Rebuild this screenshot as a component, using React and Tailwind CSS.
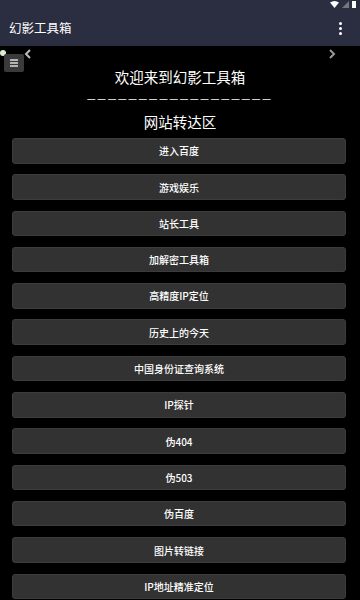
import React from 'react';

const ITEMS = [
  '进入百度',
  '游戏娱乐',
  '站长工具',
  '加解密工具箱',
  '高精度IP定位',
  '历史上的今天',
  '中国身份证查询系统',
  'IP探针',
  '伪404',
  '伪503',
  '伪百度',
  '图片转链接',
  'IP地址精准定位',
];

const FONT = { fontFamily: '"Noto Sans CJK SC", "Noto Sans", sans-serif' };

function StatusIcons() {
  return (
    <div className="absolute right-1 top-0 flex items-center gap-[3px] h-[8px]">
      <svg width="9" height="7" viewBox="0 0 9 7">
        <path d="M0 1.5 Q4.5 -1.5 9 1.5 L4.5 7 Z" fill="#fff" />
      </svg>
      <svg width="7" height="7" viewBox="0 0 7 7">
        <path d="M7 0 L7 7 L0 7 Z" fill="#777" />
      </svg>
      <div className="w-[4px] h-[7px] bg-white" />
    </div>
  );
}

export default function App() {
  return (
    <div className="w-[360px] h-[600px] overflow-hidden bg-black text-white" style={FONT}>
      {/* app bar */}
      <div className="relative h-[46px] bg-[#2b2d41] flex items-center px-[9px]">
        <StatusIcons />
        <span className="text-[12.5px] text-white leading-none mt-[10px]">幻影工具箱</span>
        <div className="ml-auto flex flex-col gap-[2px] mr-[9px] mt-[10px]">
          <div className="w-[3px] h-[3px] rounded-full bg-white" />
          <div className="w-[3px] h-[3px] rounded-full bg-white" />
          <div className="w-[3px] h-[3px] rounded-full bg-white" />
        </div>
      </div>

      {/* content */}
      <div className="relative">
        <div className="absolute left-0 top-[4px] w-[6px] h-[6px] rounded-full bg-[#d8f0d0]" />
        <div className="absolute left-[4px] top-[8px] w-[20px] h-[18px] bg-[#3a3a3a] rounded-[2px] flex items-center justify-center">
          <svg width="10" height="8" viewBox="0 0 10 8">
            <path d="M1 1 H9 M1 4 H9 M1 7 H9" stroke="#ddd" strokeWidth="1.3" />
          </svg>
        </div>
        <svg className="absolute left-[24px] top-[3px]" width="8" height="10" viewBox="0 0 8 10">
          <path d="M6 1 L2 5 L6 9" stroke="#bbb" strokeWidth="2" fill="none" />
        </svg>
        <svg className="absolute left-[328px] top-[3px]" width="8" height="10" viewBox="0 0 8 10">
          <path d="M2 1 L6 5 L2 9" stroke="#999" strokeWidth="2" fill="none" />
        </svg>

        <div className="flex flex-col items-center pt-[22px]">
          <div className="text-[14.5px] leading-[18px]">欢迎来到幻影工具箱</div>
          <div
            className="text-[8px] leading-[10px] tracking-[2.3px] font-bold mt-[8px] text-white"
            style={{ fontFamily: '"Liberation Sans", sans-serif' }}
          >
            ——————————————————
          </div>
          <div className="text-[14.5px] leading-[18px] mt-[9px]">网站转达区</div>
        </div>

        <div className="flex flex-col gap-[10.8px] pl-[12px] pr-[14px] mt-[7px]">
          {ITEMS.map((t) => (
            <button
              key={t}
              className="h-[25.5px] w-full rounded-[3px] bg-[#323232] border border-[#3c3c3c] text-[10px] text-white font-medium flex items-center justify-center"
              style={FONT}
            >
              {t}
            </button>
          ))}
        </div>
      </div>
    </div>
  );
}
